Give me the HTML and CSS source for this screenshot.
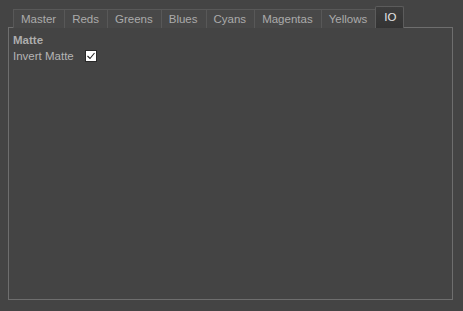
FILE: index.html
```html
<!DOCTYPE html>
<html>
	<head>
		<meta charset="utf-8">
		<title>Matte</title>
		<link rel="stylesheet" href="styles.css">
	</head>
	<body>
		<div class="panel">
			<!-- tab bar -->
			<div class="tabs">
				<span class="tab">Master</span>
				<span class="tab">Reds</span>
				<span class="tab">Greens</span>
				<span class="tab">Blues</span>
				<span class="tab">Cyans</span>
				<span class="tab">Magentas</span>
				<span class="tab">Yellows</span>
				<span class="tab active">IO</span>
			</div>

			<!-- page content -->
			<div class="pane">
				<div class="group-title">Matte</div>
				<label class="row">
					<span class="label">Invert Matte</span>
					<span class="check">
						<svg width="10" height="10" viewBox="0 0 10 10">
							<polyline points="1.5,5 4,7.5 8.5,2" fill="none" stroke="#222" stroke-width="1.1"></polyline>
						</svg>
					</span>
				</label>
			</div>
		</div>
	</body>
</html>
```

FILE: styles.css
```css
* {
    margin: 0;
    padding: 0;
    box-sizing: border-box;
}

body {
    background: #444444;
    font-family: "Liberation Sans", Arial, sans-serif;
    font-size: 11.5px;
    color: #b4b4b4;
}

.panel {
    padding: 6px 10px 10px 8px;
}

.tabs {
    display: flex;
    align-items: flex-end;
    height: 22px;
    margin-left: 5px;
    position: relative;
    z-index: 1;
}

.tab {
    display: flex;
    align-items: center;
    justify-content: center;
    height: 19px;
    padding: 0 8px 1px 7px;
    background: #484848;
    border-top: 1px solid #585858;
    border-right: 1px solid #585858;
    color: #ababab;
}

.tab:first-child {
    border-left: 1px solid #585858;
}

.tab.active {
    height: 22px;
    margin-left: -1px;
    padding: 0 7px 1px 8px;
    background: linear-gradient(#3d3d3d, #333333);
    border: 1px solid #5c5c5c;
    border-bottom: none;
    border-radius: 2px 2px 0 0;
    color: #e6e6e6;
}

.pane {
    height: 273px;
    margin-top: -1px;
    padding: 6px 4px;
    border: 1px solid #6e6e6e;
}

.group-title {
    font-weight: bold;
    line-height: 13px;
    color: #adadad;
}

.row {
    display: flex;
    align-items: center;
    gap: 11px;
    margin-top: 3px;
}

.check {
    display: flex;
    align-items: center;
    justify-content: center;
    width: 12px;
    height: 12px;
    background: #ffffff;
    border: 1px solid #2a2a2a;
}
```
